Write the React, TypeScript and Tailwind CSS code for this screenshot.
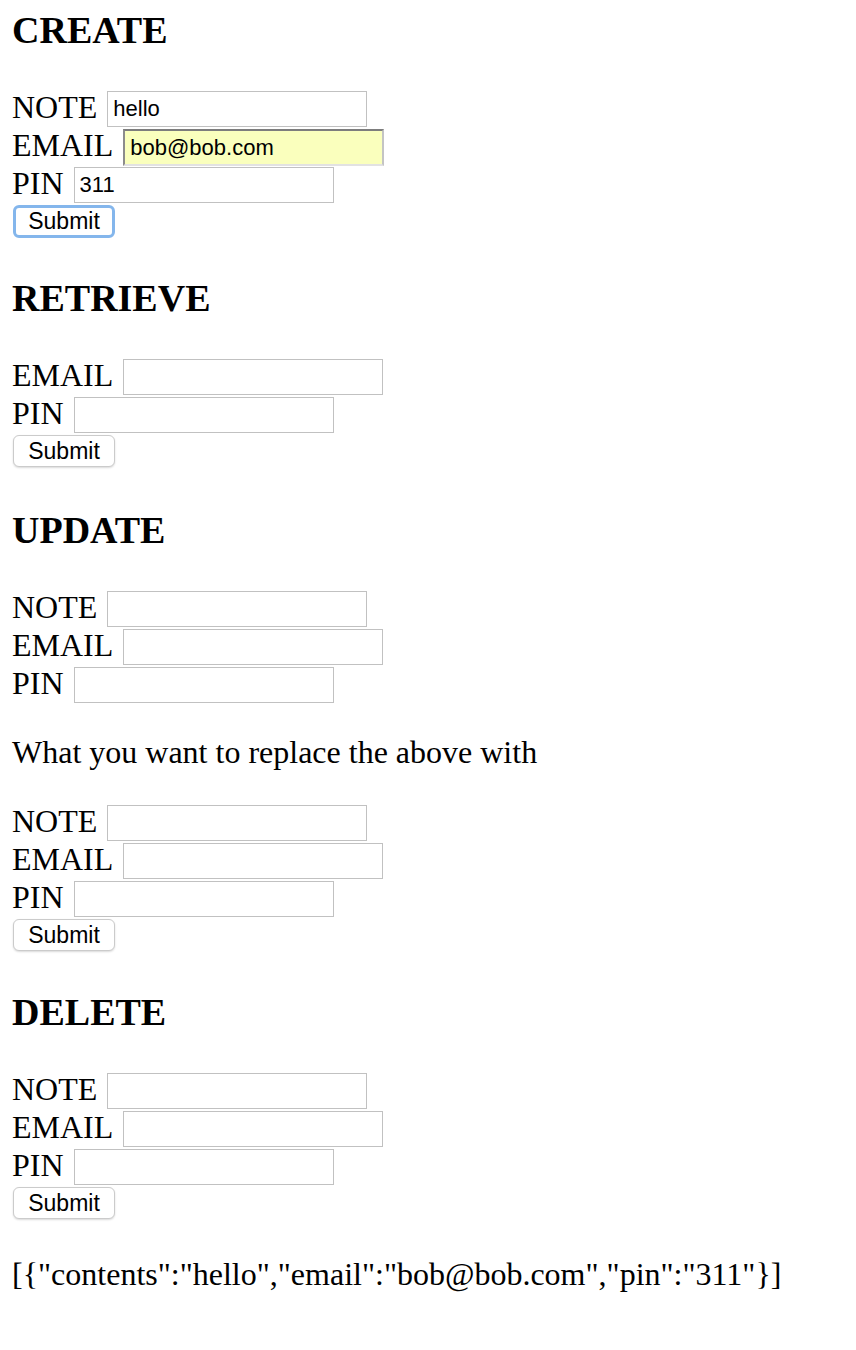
import React from "react";

const labelCls =
  "font-['Liberation_Serif','Times_New_Roman',serif] text-[32px] leading-[33px] text-black";

function Field({
  label,
  value = "",
  autofill = false,
}: {
  label: string;
  value?: string;
  autofill?: boolean;
}) {
  return (
    <div className="flex h-[38px] items-start">
      <span className={labelCls}>{label}</span>
      {autofill ? (
        <input
          readOnly
          value={value}
          className="ml-[10px] h-[37px] w-[261px] border-2 border-t-[#7d7d7d] border-l-[#8c8c8c] border-r-[#c4c4c4] border-b-[#e2e2e2] bg-[#faffbd] pl-[5px] font-['Liberation_Sans',Arial,sans-serif] text-[22px] text-black outline-none"
        />
      ) : (
        <input
          readOnly
          value={value}
          className="ml-[10px] h-[36px] w-[260px] border border-[#c1c1c1] bg-white pl-[5px] font-['Liberation_Sans',Arial,sans-serif] text-[22px] text-black outline-none"
        />
      )}
    </div>
  );
}

function SubmitButton({ focused = false }: { focused?: boolean }) {
  return (
    <div className="flex h-[32px] items-start">
      {focused ? (
        <button className="ml-[1px] flex h-[33px] w-[102px] items-center justify-center rounded-[6px] border-[3px] border-[#84b6ec] bg-white font-['Liberation_Sans',Arial,sans-serif] text-[23px] leading-none text-black">
          Submit
        </button>
      ) : (
        <button className="ml-[1px] flex h-[32px] w-[102px] items-center justify-center rounded-[6px] border border-[#cbcbcb] bg-white font-['Liberation_Sans',Arial,sans-serif] text-[23px] leading-none text-black shadow-[0_1px_2px_rgba(0,0,0,0.15)]">
          Submit
        </button>
      )}
    </div>
  );
}

function Heading({ children, className = "" }: { children: React.ReactNode; className?: string }) {
  return (
    <h3
      className={
        "h-[37px] font-['Liberation_Serif','Times_New_Roman',serif] text-[38px] font-bold leading-[37px] text-black " +
        className
      }
    >
      {children}
    </h3>
  );
}

export default function App() {
  return (
    <div className="min-h-[1350px] w-full bg-white pl-[12px] text-black">
      <Heading className="mt-[12px] mb-[42px]">CREATE</Heading>
      <Field label="NOTE" value="hello" />
      <Field label="EMAIL" value="bob@bob.com" autofill />
      <Field label="PIN" value="311" />
      <SubmitButton focused />

      <Heading className="mt-[43px] mb-[42px]">RETRIEVE</Heading>
      <Field label="EMAIL" />
      <Field label="PIN" />
      <SubmitButton />

      <Heading className="mt-[45px] mb-[42px]">UPDATE</Heading>
      <Field label="NOTE" />
      <Field label="EMAIL" />
      <Field label="PIN" />

      <p className="mt-[29px] mb-[34px] h-[37px] font-['Liberation_Serif','Times_New_Roman',serif] text-[32px] leading-[37px]">
        What you want to replace the above with
      </p>
      <Field label="NOTE" />
      <Field label="EMAIL" />
      <Field label="PIN" />
      <SubmitButton />

      <Heading className="mt-[43px] mb-[42px]">DELETE</Heading>
      <Field label="NOTE" />
      <Field label="EMAIL" />
      <Field label="PIN" />
      <SubmitButton />

      <p className="mt-[37px] h-[37px] font-['Liberation_Serif','Times_New_Roman',serif] text-[32px] leading-[37px]">
        {'[{"contents":"hello","email":"bob@bob.com","pin":"311"}]'}
      </p>
    </div>
  );
}
